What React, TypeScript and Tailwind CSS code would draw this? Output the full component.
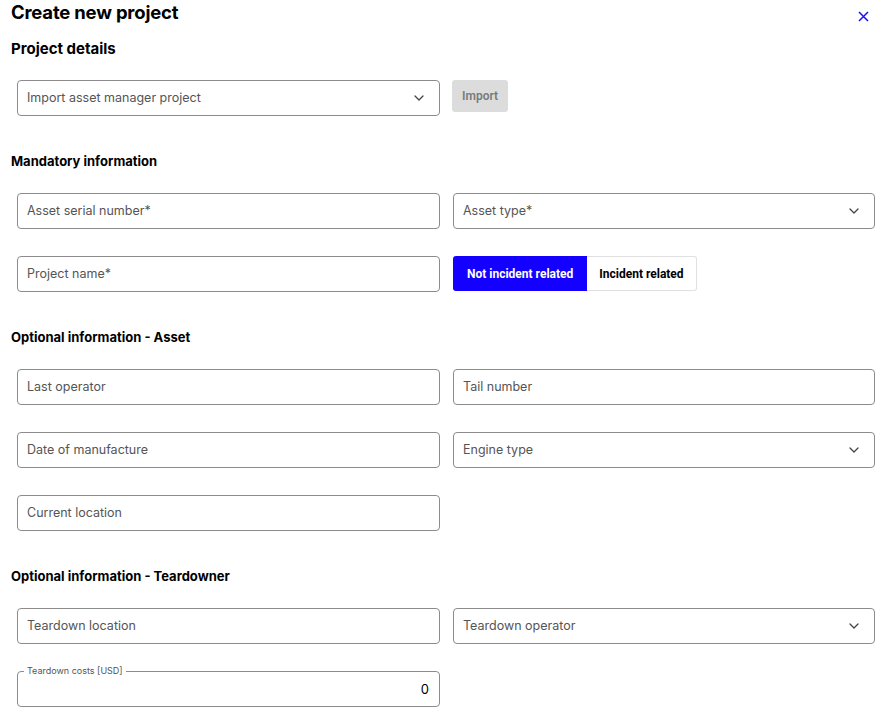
import React from "react";

const Chevron = () => (
  <svg width="12" height="12" viewBox="0 0 12 12" fill="none" className="shrink-0">
    <path d="M2 4l4 4 4-4" stroke="#444" strokeWidth="1.3" strokeLinecap="round" strokeLinejoin="round" />
  </svg>
);

const Field = ({ label, select }: { label: string; select?: boolean }) => (
  <div className="h-[36px] border border-[#8c8c8c] rounded-[4px] flex items-center justify-between pl-[9px] pr-[14px] bg-white">
    <span className="text-[12.5px] text-[#555]">{label}</span>
    {select && <Chevron />}
  </div>
);

const Section = ({ children, className }: { children: React.ReactNode; className?: string }) => (
  <div className={"text-[13px] font-bold text-black leading-[16px] " + (className || "")}>{children}</div>
);

export default function App() {
  return (
    <div className="w-[888px] h-[719px] bg-white overflow-hidden relative" style={{ fontFamily: "Inter, 'Noto Sans', sans-serif" }}>
      <div className="pl-[11px] pr-[13px]">
        <h1 className="text-[18.5px] font-bold text-black leading-[24px] tracking-[-0.2px]">Create new project</h1>
        <svg className="absolute left-[858px] top-[11px]" width="11" height="11" viewBox="0 0 11 11">
          <path d="M1 1l9 9M10 1l-9 9" stroke="#1a10f0" strokeWidth="1.5" />
        </svg>
        <div className="text-[15px] font-bold text-black mt-[16px] leading-[18px]">Project details</div>

        <div className="pl-[6px] mt-[22px] flex gap-[12px] items-start">
          <div className="w-[423px]">
            <Field label="Import asset manager project" select />
          </div>
          <div className="h-[32px] px-[10px] rounded-[3px] bg-[#dcdcdc] text-[#7a7a7a] text-[12px] font-semibold flex items-center" style={{ fontFamily: "Roboto, sans-serif" }}>
            Import
          </div>
        </div>

        <Section className="mt-[37px]">Mandatory information</Section>

        <div className="pl-[6px] mt-[24px] grid grid-cols-[423px_422px] gap-x-[13px] gap-y-[27px]">
          <Field label="Asset serial number*" />
          <Field label="Asset type*" select />
          <Field label="Project name*" />
          <div className="flex h-[35px]">
            <div className="bg-[#1400ff] text-white text-[12px] font-bold px-[14px] flex items-center rounded-l-[3px]" style={{ fontFamily: "Roboto, sans-serif" }}>
              Not incident related
            </div>
            <div className="border border-[#e0e0e0] border-l-0 text-black text-[12px] font-bold px-[12px] flex items-center rounded-r-[3px]" style={{ fontFamily: "Roboto, sans-serif" }}>
              Incident related
            </div>
          </div>
        </div>

        <Section className="mt-[37px]">Optional information - Asset</Section>

        <div className="pl-[6px] mt-[24px] grid grid-cols-[423px_422px] gap-x-[13px] gap-y-[27px]">
          <Field label="Last operator" />
          <Field label="Tail number" />
          <Field label="Date of manufacture" />
          <Field label="Engine type" select />
          <Field label="Current location" />
        </div>

        <Section className="mt-[37px]">Optional information - Teardowner</Section>

        <div className="pl-[6px] mt-[24px] grid grid-cols-[423px_422px] gap-x-[13px] gap-y-[27px]">
          <Field label="Teardown location" />
          <Field label="Teardown operator" select />
          <div className="relative h-[36px] border border-[#8c8c8c] rounded-[4px] flex items-center justify-end pr-[10px]">
            <span className="absolute -top-[7px] left-[6px] bg-white px-[3px] text-[9px] text-[#555] leading-[12px]">Teardown costs [USD]</span>
            <span className="text-[13px] text-black mt-[2px]">0</span>
          </div>
        </div>
      </div>
    </div>
  );
}
